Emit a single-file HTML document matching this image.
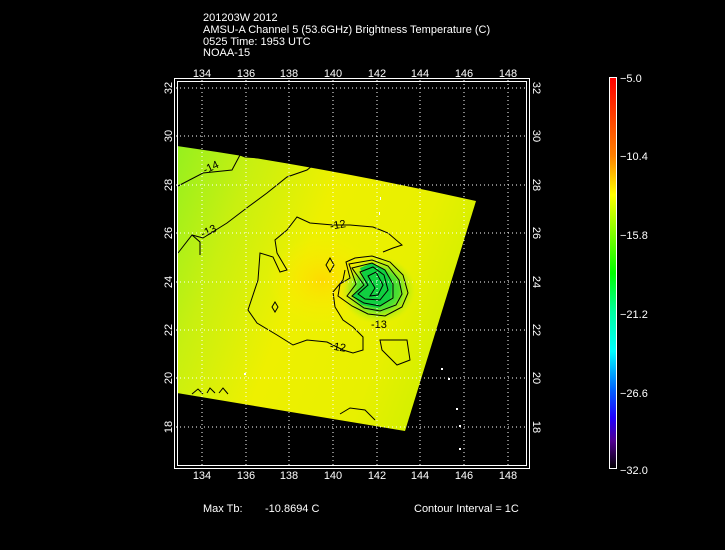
<!DOCTYPE html>
<html><head><style>
html,body{margin:0;padding:0;background:#000;width:725px;height:550px;overflow:hidden}
svg{display:block}
text{font-family:"Liberation Sans",sans-serif;fill:#fff}
.k{fill:#000}
</style></head><body>
<svg width="725" height="550" viewBox="0 0 725 550" xmlns="http://www.w3.org/2000/svg">
<defs>
<linearGradient id="cb" x1="0" y1="0" x2="0" y2="1">
<stop offset="0" stop-color="#ff0000"/>
<stop offset="0.2" stop-color="#ff8000"/>
<stop offset="0.3" stop-color="#ffff00"/>
<stop offset="0.5" stop-color="#00ff00"/>
<stop offset="0.6" stop-color="#00ffa0"/>
<stop offset="0.7" stop-color="#00ffff"/>
<stop offset="0.8" stop-color="#0060ff"/>
<stop offset="0.87" stop-color="#2000ff"/>
<stop offset="0.93" stop-color="#500090"/>
<stop offset="1" stop-color="#000000"/>
</linearGradient>
<linearGradient id="sw" x1="0" y1="0" x2="1" y2="0.35">
<stop offset="0" stop-color="#90f020"/>
<stop offset="0.25" stop-color="#c8f010"/>
<stop offset="0.5" stop-color="#eef000"/>
<stop offset="0.8" stop-color="#e8f000"/>
<stop offset="1" stop-color="#d0f000"/>
</linearGradient>
<radialGradient id="or" cx="0.5" cy="0.5" r="0.5">
<stop offset="0" stop-color="#ffd800" stop-opacity="0.9"/>
<stop offset="1" stop-color="#ffee00" stop-opacity="0"/>
</radialGradient>
<radialGradient id="ey" cx="0.5" cy="0.5" r="0.5">
<stop offset="0" stop-color="#10d040"/>
<stop offset="0.55" stop-color="#50e030"/>
<stop offset="1" stop-color="#c0f010" stop-opacity="0"/>
</radialGradient>
<clipPath id="swc"><path d="M177,146 Q330,168 476,201 L405,431 L177,393 Z"/></clipPath>
</defs>
<text x="203" y="21" font-size="11">201203W 2012</text>
<text x="203" y="33" font-size="11">AMSU-A Channel 5 (53.6GHz) Brightness Temperature (C)</text>
<text x="203" y="45" font-size="11">0525 Time: 1953 UTC</text>
<text x="203" y="56" font-size="11">NOAA-15</text>

<g clip-path="url(#swc)">
<rect x="170" y="140" width="320" height="300" fill="url(#sw)"/>
<ellipse cx="322" cy="280" rx="55" ry="45" fill="url(#or)"/>
<ellipse cx="378" cy="290" rx="38" ry="34" fill="url(#ey)"/>
<path d="M360,268 L372,263 L385,270 L392,285 L390,300 L378,308 L362,305 L352,296 L366,285 Z" fill="#10d040"/>
</g>
<g fill="none" stroke="#000" stroke-width="1">
<path d="M178,186 L203,173 L232,170 L240,155 L245,157 L260,158 L270,158"/>
<path d="M178,253 L192,235 L200,242 L200,255 M192,235 L203,238 L227,223 L248,207 L267,193 L287,177 L307,170 L312,166"/>
<path d="M383,252 L393,248 L402,245 L388,233 L373,227 L350,225 L333,225 L310,223 L297,217 L287,230 L275,240 L277,253 L287,270 L280,272 L273,257 L260,253 L258,280 L248,310 L257,323 L277,335 L293,345 L307,340 L327,342 L343,350 L353,353 L363,350 L363,337 L353,327 L343,320 L335,307 L333,292 L343,280 L345,270"/>
<path d="M346,262 L355,258 L372,256 L390,262 L403,275 L408,293 L402,307 L385,316 L368,314 L352,306 L338,296 L340,284 L350,278 Z"/>
<path d="M349,264 L372,260 L388,266 L399,280 L402,294 L396,305 L380,311 L364,308 L347,296 L356,284 Z"/>
<path d="M352,268 L372,263 L385,270 L393,284 L393,298 L380,306 L364,303 L352,296 L364,285 Z"/>
<path d="M360,272 L373,267 L384,275 L388,290 L380,300 L365,299 L358,294 L368,285 Z"/>
<path d="M368,276 L376,272 L383,285 L378,295 L370,296 L375,288 Z"/>
<path d="M380,340 L407,340 L410,360 L397,365 L382,350 Z"/>
<path d="M330,258 L334,265 L330,272 L326,265 Z"/>
<path d="M275,302 L278,307 L275,312 L272,307 Z"/>
<path d="M192,394 L198,389 L203,394 M207,393 L210,388 L215,393 M219,393 L223,388 L228,394"/>
<path d="M340,414 L350,408 L365,410 L375,420"/>
</g>
<g font-size="11">
<text class="k" x="203" y="172" transform="rotate(-25 208 168)">-14</text>
<text class="k" x="201" y="235" transform="rotate(-25 208 232)">-13</text>
<text class="k" x="330" y="229" transform="rotate(-10 335 226)">-12</text>
<text class="k" x="330" y="350" transform="rotate(10 335 347)">-12</text>
<text class="k" x="371" y="328">-13</text>
</g>

<g stroke="#fff" stroke-width="1" stroke-dasharray="1,3" fill="none">
<path d="M202,80V468 M246,80V468 M289,80V468 M333,80V468 M377,80V468 M420,80V468 M464,80V468 M508,80V468"/>
<path d="M176,88H528 M176,136H528 M176,185H528 M176,233H528 M176,282H528 M176,330H528 M176,378H528 M176,427H528"/>
</g>
<rect x="174.5" y="78.5" width="355" height="390" fill="none" stroke="#fff"/>
<rect x="177.5" y="81.5" width="349" height="384" fill="none" stroke="#fff"/>
<g font-size="11" text-anchor="middle">
<text x="202" y="77">134</text><text x="246" y="77">136</text><text x="289" y="77">138</text><text x="333" y="77">140</text><text x="377" y="77">142</text><text x="420" y="77">144</text><text x="464" y="77">146</text><text x="508" y="77">148</text>
<text x="202" y="479">134</text><text x="246" y="479">136</text><text x="289" y="479">138</text><text x="333" y="479">140</text><text x="377" y="479">142</text><text x="420" y="479">144</text><text x="464" y="479">146</text><text x="508" y="479">148</text>
</g>
<g font-size="11" text-anchor="middle">
<text transform="translate(172,88) rotate(-90)">32</text><text transform="translate(172,136) rotate(-90)">30</text><text transform="translate(172,185) rotate(-90)">28</text><text transform="translate(172,233) rotate(-90)">26</text><text transform="translate(172,282) rotate(-90)">24</text><text transform="translate(172,330) rotate(-90)">22</text><text transform="translate(172,378) rotate(-90)">20</text><text transform="translate(172,427) rotate(-90)">18</text>
<text transform="translate(533,88) rotate(90)">32</text><text transform="translate(533,136) rotate(90)">30</text><text transform="translate(533,185) rotate(90)">28</text><text transform="translate(533,233) rotate(90)">26</text><text transform="translate(533,282) rotate(90)">24</text><text transform="translate(533,330) rotate(90)">22</text><text transform="translate(533,378) rotate(90)">20</text><text transform="translate(533,427) rotate(90)">18</text>
</g>
<g fill="#fff">
<rect x="244" y="373" width="2" height="2"/><rect x="441" y="368" width="2" height="2"/><rect x="448" y="378" width="2" height="2"/><rect x="456" y="408" width="2" height="2"/><rect x="459" y="425" width="2" height="2"/><rect x="459" y="448" width="2" height="2"/><rect x="380" y="197" width="1" height="3"/><rect x="379" y="212" width="1" height="3"/>
</g>

<rect x="609.5" y="77.5" width="7" height="391" fill="url(#cb)" stroke="#fff"/>
<g font-size="11">
<text x="620" y="82">−5.0</text><text x="620" y="160">−10.4</text><text x="620" y="239">−15.8</text><text x="620" y="318">−21.2</text><text x="620" y="397">−26.6</text><text x="620" y="474">−32.0</text>
</g>
<text x="203" y="512" font-size="11">Max Tb:</text>
<text x="265" y="512" font-size="11">-10.8694   C</text>
<text x="414" y="512" font-size="11">Contour Interval = 1C</text>
</svg>
</body></html>
